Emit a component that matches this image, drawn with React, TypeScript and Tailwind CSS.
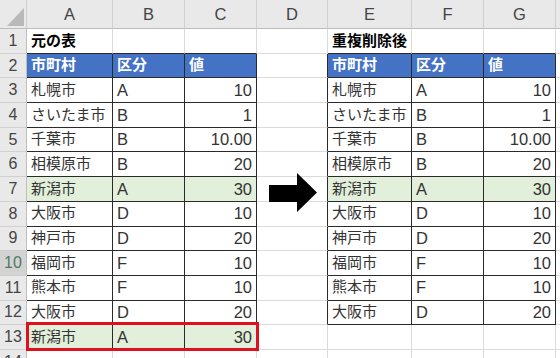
import React from "react";

type Row = [string, string, string];

const source: Row[] = [
  ["札幌市", "A", "10"],
  ["さいたま市", "B", "1"],
  ["千葉市", "B", "10.00"],
  ["相模原市", "B", "20"],
  ["新潟市", "A", "30"],
  ["大阪市", "D", "10"],
  ["神戸市", "D", "20"],
  ["福岡市", "F", "10"],
  ["熊本市", "F", "10"],
  ["大阪市", "D", "20"],
  ["新潟市", "A", "30"],
];

const deduped: Row[] = source.slice(0, 10);
const headers: Row = ["市町村", "区分", "値"];
const letters = ["A", "B", "C", "D", "E", "F", "G", ""];

// which sheet cells belong to one of the two bordered tables
const inTable = (r: number, c: number) =>
  (c >= 1 && c <= 3 && r >= 2 && r <= 13) || (c >= 5 && c <= 7 && r >= 2 && r <= 12);

function content(r: number, c: number): { text: string; right?: boolean; bold?: boolean } {
  if (r === 1 && c === 1) return { text: "元の表", bold: true };
  if (r === 1 && c === 5) return { text: "重複削除後", bold: true };
  if (r === 2 && c >= 1 && c <= 3) return { text: headers[c - 1], bold: true };
  if (r === 2 && c >= 5 && c <= 7) return { text: headers[c - 5], bold: true };
  if (r >= 3 && r <= 13 && c >= 1 && c <= 3) return { text: source[r - 3][c - 1], right: c === 3 };
  if (r >= 3 && r <= 12 && c >= 5 && c <= 7) return { text: deduped[r - 3][c - 5], right: c === 7 };
  return { text: "" };
}

function SheetCell({ r, c }: { r: number; c: number }) {
  const { text, right, bold } = content(r, c);
  const darkR = inTable(r, c) || inTable(r, c + 1);
  const darkB = inTable(r, c) || inTable(r + 1, c);
  const blue = r === 2 && inTable(r, c);
  const green = inTable(r, c) && ((r === 7) || (r === 13 && c <= 3));
  const latin = /^[A-Za-z0-9.]+$/.test(text);

  return (
    <div
      className={`flex items-center overflow-visible whitespace-nowrap border-r border-b px-[4px] ${
        latin ? "text-[16.5px]" : "text-[15px]"
      } ${right ? "justify-end" : "justify-start"} ${darkR ? "border-r-[#2a2a2a]" : "border-r-[#dadada]"} ${
        darkB ? "border-b-[#2a2a2a]" : "border-b-[#dadada]"
      } ${blue ? "bg-[#4472c4] text-white" : green ? "bg-[#e2efda] text-[#333]" : "bg-white text-[#333]"} ${
        bold ? "font-bold" : ""
      } ${bold && !blue ? "text-black" : ""}`}
    >
      {text}
    </div>
  );
}

function RowHeader({ r }: { r: number }) {
  const active = r === 10;
  return (
    <div
      className={`flex items-center justify-center border-r border-b border-r-[#bdbdbd] border-b-[#d0d0d0] text-[16px] ${
        active ? "bg-[#d3d3d3] text-[#4d7a62]" : "bg-[#e9e9e9] text-[#444]"
      }`}
    >
      {r}
    </div>
  );
}

export default function App() {
  const rows = Array.from({ length: 14 }, (_, i) => i + 1);

  return (
    <div className="relative h-[358px] w-[560px] overflow-hidden bg-white font-['Liberation_Sans','Noto_Sans_CJK_JP',sans-serif]">
      <div className="grid h-full grid-cols-[27px_86px_72px_72px_71px_84px_72px_72px_1fr] grid-rows-[29px_repeat(13,24.7px)_1fr]">
        {/* corner */}
        <div className="relative border-r border-b border-r-[#cfcfcf] border-b-[#bdbdbd] bg-[#e9e9e9]">
          <svg className="absolute left-0 top-0" width="27" height="29" viewBox="0 0 27 29">
            <polygon points="7,26 24,26 24,8" fill="#b9b9b9" />
          </svg>
        </div>
        {letters.map((l, i) => (
          <div
            key={"h" + i}
            className="flex items-center justify-center border-r border-b border-r-[#cfcfcf] border-b-[#bdbdbd] bg-[#e9e9e9] text-[16.5px] text-[#444]"
          >
            {l}
          </div>
        ))}

        {rows.map((r) => (
          <React.Fragment key={r}>
            <RowHeader r={r} />
            {Array.from({ length: 8 }, (_, i) => i + 1).map((c) => (
              <SheetCell key={c} r={r} c={c} />
            ))}
          </React.Fragment>
        ))}
      </div>

      {/* block arrow between the two tables */}
      <svg className="absolute left-[269px] top-[173px]" width="49" height="40" viewBox="0 0 49 40">
        <polygon points="0,12 28,12 28,0 48,19.5 28,39 28,29 0,29" fill="#000" />
      </svg>

      {/* duplicate row outline */}
      <div className="absolute left-[26px] top-[322px] h-[29px] w-[233px] border-[3px] border-[#e0101e]" />
    </div>
  );
}
